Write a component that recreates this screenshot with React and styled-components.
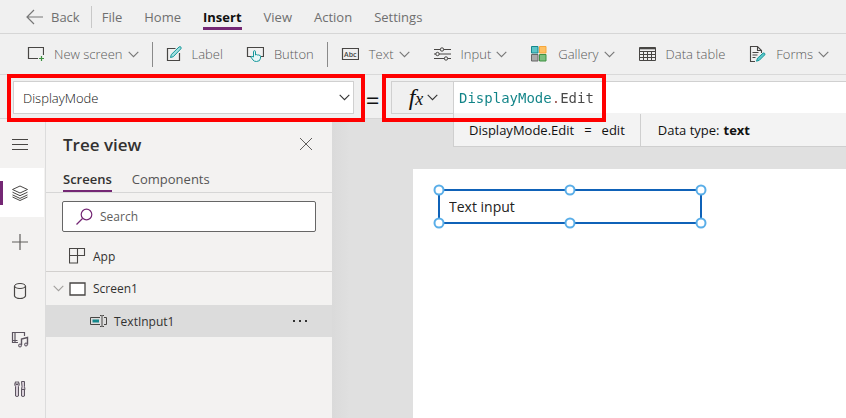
import React, { useState } from "react";
import styled, { createGlobalStyle, css } from "styled-components";

const PURPLE = "#742774";
const TEAL = "#0f8387";
const SANS = '"Open Sans", "Noto Sans", sans-serif';
const MONO = '"DejaVu Sans Mono", "Liberation Mono", monospace';

const GlobalStyle = createGlobalStyle`
  *, *::before, *::after { box-sizing: border-box; }
  body { margin: 0; font-family: ${SANS}; font-size: 13px; color: #323130; background: #e0e0e0; }
  button, input, select { font: inherit; color: inherit; margin: 0; }
  button { border: 0; padding: 0; background: none; cursor: pointer; }
  svg { display: block; flex: none; }
`;

const Page = styled.div`
  display: flex;
  flex-direction: column;
  min-height: 100vh;
`;

const MenuBar = styled.nav`
  display: flex;
  align-items: center;
  gap: 22px;
  height: 34px;
  padding-left: 26px;
  background: #f0f0f0;
  border-bottom: 1px solid #d6d6d6;
`;

const BackButton = styled.button`
  display: flex;
  align-items: center;
  gap: 8px;
  height: 22px;
  padding-right: 11px;
  margin-right: -12px;
  border-right: 1px solid #c8c8c8;
  color: #6f6f6f;
`;

const MenuItem = styled.button`
  height: 26px;
  padding-top: 4px;
  border-bottom: 3px solid transparent;
  color: #6f6f6f;
  line-height: 18px;
  ${(p) =>
    p.$active &&
    css`
      border-color: ${PURPLE};
      color: #111;
      font-weight: 700;
    `}
`;

const ToolBar = styled.div`
  display: flex;
  align-items: center;
  gap: 25px;
  height: 41px;
  padding-left: 26px;
  background: #f0f0f0;
  border-bottom: 1px solid #d9d9d9;
`;

const ToolGroup = styled.div`
  display: flex;
  align-items: center;
  gap: 23px;
  & + & {
    margin-left: -12px;
    padding-left: 13px;
    border-left: 1px solid #8a8a8a;
    height: 25px;
  }
`;

const ToolButton = styled.button`
  display: flex;
  align-items: center;
  gap: 10px;
  color: #5a5a5a;
  font-weight: 300;
  white-space: nowrap;
`;

const ToolText = styled.span`
  display: flex;
  align-items: center;
  gap: 5px;
`;

const FormulaBar = styled.div`
  display: flex;
  align-items: flex-start;
  height: 44px;
  padding: 6px 0 0 13px;
  background: #f0f0f0;
  border-bottom: 1px solid #d6d6d6;
  position: relative;
  z-index: 1;
`;

const Highlight = styled.div`
  position: absolute;
  inset: ${(p) => p.$inset};
  width: ${(p) => p.$width};
  border: 4px solid #f00;
  pointer-events: none;
  z-index: 3;
`;

const PropertyField = styled.div`
  position: relative;
  flex: none;
  width: 341px;
`;

const PropertySelect = styled.select`
  width: 100%;
  height: 33px;
  padding: 0 30px 0 9px;
  appearance: none;
  border: 1px solid #d0d0d0;
  border-radius: 0;
  background: #fff;
  color: #111;
  font-weight: 300;
`;

const SelectArrow = styled.span`
  position: absolute;
  right: 4px;
  top: 13px;
  pointer-events: none;
`;

const EqualSign = styled.span`
  flex: none;
  width: 37px;
  color: #111;
  font-size: 24px;
  line-height: 37px;
  text-align: center;
`;

const FormulaField = styled.div`
  position: relative;
  display: flex;
  flex: 1;
  height: 33px;
  border: 1px solid #d0d0d0;
  border-right: 0;
  background: #fff;
`;

const FxButton = styled.button`
  display: flex;
  align-items: center;
  justify-content: center;
  gap: 4px;
  flex: none;
  width: 62px;
  padding-left: 2px;
  border-right: 1px solid #d0d0d0;
  background: #f0f0f0;
`;

const FxMark = styled.span`
  color: #111;
  font: italic 24px/24px "Liberation Serif", serif;
  small {
    font-size: 18px;
  }
`;

const FormulaInput = styled.input`
  flex: 1;
  min-width: 0;
  padding: 0;
  margin-left: 5px;
  border: 0;
  outline: 0;
  background: linear-gradient(90deg, ${TEAL} 11ch, #96504a 11ch 12ch, #484848 12ch);
  background-clip: text;
  color: transparent;
  font-family: ${MONO};
  font-size: 14px;
`;

const ResultBar = styled.div`
  position: absolute;
  top: 100%;
  left: 61px;
  right: 0;
  display: flex;
  align-items: center;
  height: 34px;
  border: 1px solid #cfcfcf;
  border-width: 0 0 1px 1px;
  background: #f3f3f3;
  color: #111;
`;

const ResultCell = styled.div`
  display: flex;
  gap: ${(p) => p.$gap};
  padding: 0 15px;
  line-height: 32px;
  white-space: nowrap;
  & + & {
    padding-left: 17px;
    border-left: 1px solid #cfcfcf;
  }
`;

const Body = styled.div`
  display: flex;
  flex: 1;
`;

const Rail = styled.nav`
  flex: none;
  width: 46px;
  background: #f3f2f1;
  border-right: 1px solid #dcdcdc;
`;

const RailButton = styled.button`
  display: grid;
  place-items: center;
  width: 44px;
  height: 49px;
  padding-right: 5px;
  ${(p) =>
    p.$active &&
    css`
      background: linear-gradient(${PURPLE}, ${PURPLE}) 0 50% / 3px 24px no-repeat #fff;
    `}
`;

const Panel = styled.aside`
  flex: none;
  width: 286px;
  background: #f3f2f1;
`;

const PanelHeader = styled.header`
  display: flex;
  align-items: center;
  justify-content: space-between;
  height: 49px;
  padding: 1px 19px 0 17px;
  h2 {
    margin: 0;
    font-size: 17px;
    font-weight: 600;
  }
`;

const PanelTabs = styled.div`
  display: flex;
  gap: 20px;
  height: 25px;
  padding-left: 17px;
  border-bottom: 1px solid #d6d6d6;
`;

const PanelTab = styled.button`
  height: 24px;
  border-bottom: 2px solid transparent;
  color: #555;
  line-height: 20px;
  ${(p) =>
    p.$active &&
    css`
      border-color: ${PURPLE};
      color: #323130;
      font-weight: 600;
    `}
`;

const SearchBox = styled.label`
  display: flex;
  align-items: center;
  gap: 7px;
  height: 31px;
  margin: 8px 16px 0;
  padding-left: 13px;
  border: 1px solid #666;
  border-radius: 2px;
  background: #fff;
  input {
    flex: 1;
    min-width: 0;
    padding: 0;
    border: 0;
    outline: 0;
    background: none;
    font-size: 12px;
  }
  input::placeholder {
    color: #605e5c;
  }
`;

const TreeRow = styled.div`
  display: flex;
  align-items: center;
  justify-content: ${(p) => (p.$selected ? "space-between" : "flex-start")};
  gap: 5px;
  height: ${(p) => p.$height || "33px"};
  padding: ${(p) => p.$padding};
  font-size: 12px;
  border-bottom: 1px solid ${(p) => (p.$line ? "#d2d0ce" : "transparent")};
  background: ${(p) => (p.$selected ? "#dcdcdc" : "none")};
`;

const TreeName = styled.button`
  display: flex;
  align-items: center;
  gap: 7px;
`;

const Workspace = styled.main`
  display: flex;
  flex: 1;
  padding: 50px 0 0 81px;
  background: linear-gradient(90deg, #dadada, #e0e0e0 18px);
`;

const Artboard = styled.section`
  flex: 1;
  padding: 20px 25px;
  background: #fff;
`;

const Selection = styled.div`
  position: relative;
  width: 264px;
  border: 2px solid #0f62b8;
  input {
    display: block;
    width: 100%;
    height: 31px;
    padding: 0 9px;
    border: 0;
    outline: 0;
    background: none;
    color: #222;
    font-size: 14px;
  }
`;

const Handle = styled.i`
  position: absolute;
  left: ${(p) => p.$x};
  top: ${(p) => p.$y};
  width: 11px;
  height: 11px;
  border: 2px solid #5aaee8;
  border-radius: 50%;
  background: #fff;
  transform: translate(-50%, -50%);
`;

const Svg = ({ w = 18, h = 18, stroke = "#484644", children }) => (
  <svg width={w} height={h} viewBox={`0 0 ${w} ${h}`} fill="none" stroke={stroke} aria-hidden="true">
    {children}
  </svg>
);

const Chevron = ({ color = "#777" }) => (
  <Svg w={11} h={7} stroke={color}>
    <path d="M.7.8 5.5 5.6 10.3.8" strokeWidth="1.1" />
  </Svg>
);

const icons = {
  back: (
    <Svg w={17} h={16} stroke="#777">
      <path d="M8 1 1 8l7 7M1 8h16" strokeWidth="1.2" />
    </Svg>
  ),
  screen: (
    <Svg>
      <path d="M12 13.5H2.5v-11h15V10" strokeWidth="1.2" />
      <path d="M15.5 11v5M13 13.5h5" stroke="#3d9140" strokeWidth="1.2" />
    </Svg>
  ),
  label: (
    <Svg w={16}>
      <path d="M9.500 3.500H1.500v12h12V8" strokeWidth="1.2" />
      <path d="M4.500 12.500l.8-3 7.700-7.500q1.200-.8 2 .2.500 1-.3 1.800L7.300 11.700z" stroke="#14979b" fill="#9fe0e0" />
    </Svg>
  ),
  button: (
    <Svg>
      <path d="M5 11.500H1.500v-9h16v9H15" strokeWidth="1.2" />
      <path
        d="M7.500 12V6.700q0-1 1-1t1 1V10q.8-.9 1.800 0 1-.5 1.700.3 1.300-.4 1.500.9v2q-.2 3.300-4 3.300-2.500 0-3.500-1.500L4.800 12q.7-1.300 2.700 0z"
        stroke="#14979b"
        fill="#e6f7f7"
      />
    </Svg>
  ),
  text: (
    <Svg>
      <path d="M1.500 3.500h16v11h-16z" strokeWidth="1.200" />
      <text x="3" y="11.500" fontSize="7" fontWeight="600" fill="#444" stroke="none" fontFamily="Open Sans">
        Abc
      </text>
    </Svg>
  ),
  input: (
    <Svg>
      <path d="M1 4.500h6.500m3 0H18M1 9h2m3 0h12M1 13.500h10.500m3 0H18" strokeWidth="1.200" />
      <circle cx="9" cy="4.500" r="1.700" />
      <circle cx="4.500" cy="9" r="1.700" />
      <circle cx="13" cy="13.500" r="1.700" />
    </Svg>
  ),
  gallery: (
    <Svg>
      <path d="M1.500 1.500h6.500v6.500h-6.500z" fill="#5cc5c8" stroke="#14878b" />
      <path d="M9.500 1.500h6.500v6.500h-6.500z" fill="#ffc062" stroke="#f5a73b" />
      <path d="M1.500 9.500h6.500v6.500h-6.500z" fill="#aaa" stroke="#666" />
      <path d="M9.500 9.500h6.500v6.500h-6.500z" fill="#7cbf7e" stroke="#3d9140" />
    </Svg>
  ),
  table: (
    <Svg>
      <path d="M1.500 2.500h16v13h-16zM1.500 6.500h16M1.500 9.500h16M1.500 12.500h16M5.500 6v9.500M9.500 6v9.500M13.500 6v9.500" />
      <path d="M1.500 3.500h16" strokeWidth="1.600" />
    </Svg>
  ),
  forms: (
    <Svg>
      <path d="M7 16.500H2.500v-15h7l4 4V8M9.500 1.500v4h4M4.500 7.500h6M4.500 10h5M4.500 12.500h3" strokeWidth="1.100" />
      <path d="M8.500 16.200l1-3 5.500-5q1-.6 1.700.2.600.8-.1 1.600l-5.300 5.300z" stroke="#14979b" fill="#5cc5c8" />
    </Svg>
  ),
  menu: (
    <Svg>
      <path d="M1 4.500h16M1 9.500h16M1 14.500h16" />
    </Svg>
  ),
  layers: (
    <Svg>
      <path d="M9 2l7.500 3.500L9 9 1.500 5.500zM1.500 8.200 9 11.700l7.500-3.500M1.500 10.900 9 14.400l7.500-3.500M1.500 13 9 16.500l7.500-3.500" />
    </Svg>
  ),
  plus: (
    <Svg>
      <path d="M9 1v16M1 9h16" stroke="#605e5c" strokeWidth="1.200" />
    </Svg>
  ),
  data: (
    <Svg>
      <ellipse cx="9" cy="4" rx="5.500" ry="2.500" />
      <path d="M3.500 4v10q1.300 2.500 5.500 2.500t5.500-2.500V4" strokeWidth="1.200" />
    </Svg>
  ),
  media: (
    <Svg stroke="#5c5560">
      <path d="M7 11.500H1.500v-10h12V5M4 2v9.500M1.500 9.500h5" strokeWidth="1.200" />
      <path d="M10.500 14V8l6-1.500v7" strokeWidth="1.400" />
      <circle cx="9" cy="14.500" r="1.500" fill="#cfc8d0" />
      <circle cx="15" cy="13.500" r="1.500" fill="#cfc8d0" />
    </Svg>
  ),
  tools: (
    <Svg stroke="#5c5560">
      <path
        d="M5 1.500v3h2v-3q1.500 1.200 1.200 3.500L7.500 6.500V16q-1.500 1-3 0V6.500L3.800 5q-.3-2.300 1.200-3.500zM10.500 1.500h3v5l.5 3H10.500l.500-3zM10.500 9.500H13.500V16q-1.500 1-3 0z"
        fill="#d9d0da"
      />
    </Svg>
  ),
  close: (
    <Svg w={14} h={14} stroke="#605e5c">
      <path d="M1 1l12 12M13 1 1 13" />
    </Svg>
  ),
  search: (
    <Svg w={17} h={17} stroke={PURPLE}>
      <circle cx="10.500" cy="6.500" r="5.300" strokeWidth="1.200" />
      <path d="M6.500 10.500.5 16.500" strokeWidth="1.300" />
    </Svg>
  ),
  app: (
    <Svg w={17} h={16}>
      <path d="M.5.5h15v7H.5zM8.500.5v14.500H.5V.5" strokeWidth="1.100" />
    </Svg>
  ),
  screenNode: (
    <Svg w={17} h={14}>
      <path d="M1 1h15v12H1z" fill="#fff" strokeWidth="1.300" />
    </Svg>
  ),
  inputNode: (
    <Svg w={17} h={14}>
      <path d="M10 3.500H.5v7H10M14 3.500h2.500v7H14" />
      <path d="M2.500 7H9" stroke="#14878b" strokeWidth="3" />
      <path d="M10 1.500h1.500l.5.500.5-.5H14M12 2v10M10 12.500h1.500l.5-.5.500.5H14" />
    </Svg>
  ),
  more: (
    <Svg w={17} h={4}>
      <path d="M1 2h2M7 2h2M13 2h2" stroke="#333" strokeWidth="2" />
    </Svg>
  ),
};

const MENU = ["File", "Home", "Insert", "View", "Action", "Settings"];

const TOOLS = [
  [{ icon: "screen", text: "New screen", menu: true }],
  [
    { icon: "label", text: "Label" },
    { icon: "button", text: "Button" },
  ],
  [
    { icon: "text", text: "Text", menu: true },
    { icon: "input", text: "Input", menu: true },
    { icon: "gallery", text: "Gallery", menu: true },
    { icon: "table", text: "Data table" },
    { icon: "forms", text: "Forms", menu: true },
  ],
];

const RAIL = [
  ["menu", "Expand"],
  ["layers", "Tree view"],
  ["plus", "Insert"],
  ["data", "Data"],
  ["media", "Media"],
  ["tools", "Advanced tools"],
];

const START = "-1px";
const END = "calc(100% + 1px)";
const HANDLES = [
  [START, START],
  ["50%", START],
  [END, START],
  [START, END],
  ["50%", END],
  [END, END],
];

export default function App() {
  const [formula, setFormula] = useState("DisplayMode.Edit");
  return (
    <Page>
      <GlobalStyle />
      <MenuBar>
        <BackButton>
          {icons.back}
          Back
        </BackButton>
        {MENU.map((name) => (
          <MenuItem key={name} $active={name === "Insert"}>
            {name}
          </MenuItem>
        ))}
      </MenuBar>

      <ToolBar role="toolbar" aria-label="Insert">
        {TOOLS.map((group, i) => (
          <ToolGroup key={i}>
            {group.map((tool) => (
              <ToolButton key={tool.text}>
                {icons[tool.icon]}
                <ToolText>
                  {tool.text}
                  {tool.menu && <Chevron />}
                </ToolText>
              </ToolButton>
            ))}
          </ToolGroup>
        ))}
      </ToolBar>

      <FormulaBar>
        <PropertyField>
          <PropertySelect aria-label="Property" defaultValue="DisplayMode">
            <option>DisplayMode</option>
          </PropertySelect>
          <SelectArrow>
            <Chevron color="#333" />
          </SelectArrow>
          <Highlight $inset="-7px -11px -8px -6px" />
        </PropertyField>
        <EqualSign>=</EqualSign>
        <FormulaField>
          <FxButton aria-label="Functions">
            <FxMark>
              f<small>x</small>
            </FxMark>
            <Chevron color="#333" />
          </FxButton>
          <FormulaInput
            aria-label="Formula"
            spellCheck={false}
            value={formula}
            onChange={(e) => setFormula(e.target.value)}
          />
          <ResultBar>
            <ResultCell $gap="10px">
              <span>DisplayMode.Edit</span>
              <span>=</span>
              <span>edit</span>
            </ResultCell>
            <ResultCell $gap="4px">
              <span>Data type:</span>
              <b>text</b>
            </ResultCell>
          </ResultBar>
          <Highlight $inset="-8px auto -9px -10px" $width="224px" />
        </FormulaField>
      </FormulaBar>

      <Body>
        <Rail aria-label="Authoring">
          {RAIL.map(([icon, label]) => (
            <RailButton key={icon} aria-label={label} $active={icon === "layers"}>
              {icons[icon]}
            </RailButton>
          ))}
        </Rail>

        <Panel>
          <PanelHeader>
            <h2>Tree view</h2>
            <button aria-label="Close">{icons.close}</button>
          </PanelHeader>
          <PanelTabs role="tablist">
            <PanelTab role="tab" aria-selected="true" $active>
              Screens
            </PanelTab>
            <PanelTab role="tab" aria-selected="false">
              Components
            </PanelTab>
          </PanelTabs>
          <SearchBox>
            {icons.search}
            <input type="search" placeholder="Search" aria-label="Search" />
          </SearchBox>
          <TreeRow $height="40px" $padding="9px 16px 0 23px" $line>
            <TreeName>{icons.app}App</TreeName>
          </TreeRow>
          <TreeRow $padding="1px 16px 0 7px">
            <button aria-label="Collapse Screen1">
              <Chevron color="#a19f9d" />
            </button>
            <TreeName>{icons.screenNode}Screen1</TreeName>
          </TreeRow>
          <TreeRow $height="32px" $padding="1px 23px 0 44px" $selected>
            <TreeName>{icons.inputNode}TextInput1</TreeName>
            <button aria-label="More actions">{icons.more}</button>
          </TreeRow>
        </Panel>

        <Workspace>
          <Artboard>
            <Selection>
              <input aria-label="TextInput1" defaultValue="Text input" />
              {HANDLES.map(([x, y]) => (
                <Handle key={x + y} $x={x} $y={y} />
              ))}
            </Selection>
          </Artboard>
        </Workspace>
      </Body>
    </Page>
  );
}
